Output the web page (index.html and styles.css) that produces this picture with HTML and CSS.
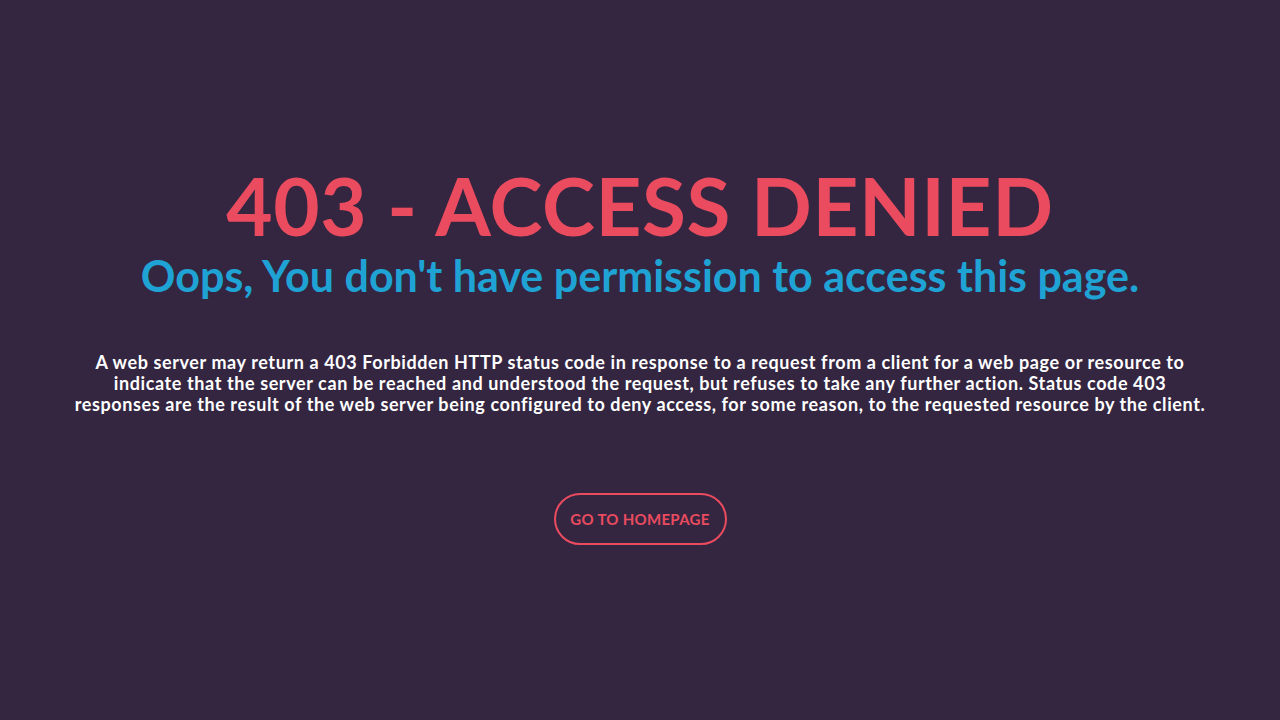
FILE: index.html
```html
<!DOCTYPE html>
<html lang="en">
<head>
<meta charset="utf-8">
<title>403 - Access Denied</title>
<link rel="stylesheet" href="styles.css">
</head>
<body>
<main class="page">
  <h1 class="title">403 - ACCESS DENIED</h1>
  <h2 class="subtitle">Oops, You don't have permission to access this page.</h2>
  <p class="text">A web server may return a 403 Forbidden HTTP status code in response to a request from a client for a web page or resource to indicate that the server can be reached and understood the request, but refuses to take any further action. Status code 403 responses are the result of the web server being configured to deny access, for some reason, to the requested resource by the client.</p>
  <a class="btn" href="#">GO TO HOMEPAGE</a>
</main>
</body>
</html>
```
FILE: styles.css
```css
html, body {
  margin: 0;
  padding: 0;
  height: 100%;
}
body {
  background: #342641;
  font-family: Lato, "Open Sans", sans-serif;
  color: #fff;
}
.page {
  display: flex;
  flex-direction: column;
  align-items: center;
  padding-top: 158px;
}
.title {
  margin: 0;
  font-size: 80px;
  line-height: 94px;
  font-weight: 700;
  color: #ea4b5f;
  letter-spacing: 0.6px;
}
.subtitle {
  margin: 0;
  font-size: 43px;
  line-height: 48px;
  font-weight: 700;
  color: #1fa3d4;
}
.text {
  margin: 52px 0 0;
  width: 1140px;
  text-align: center;
  font-size: 18px;
  line-height: 21px;
  font-weight: 700;
  letter-spacing: 0.6px;
}
.btn {
  margin-top: 78px;
  display: inline-flex;
  align-items: center;
  justify-content: center;
  width: 169px;
  height: 48px;
  border: 2px solid #ea4b5f;
  border-radius: 26px;
  color: #ea4b5f;
  text-decoration: none;
  font-size: 15px;
  font-weight: 700;
  letter-spacing: 0.3px;
}
```
